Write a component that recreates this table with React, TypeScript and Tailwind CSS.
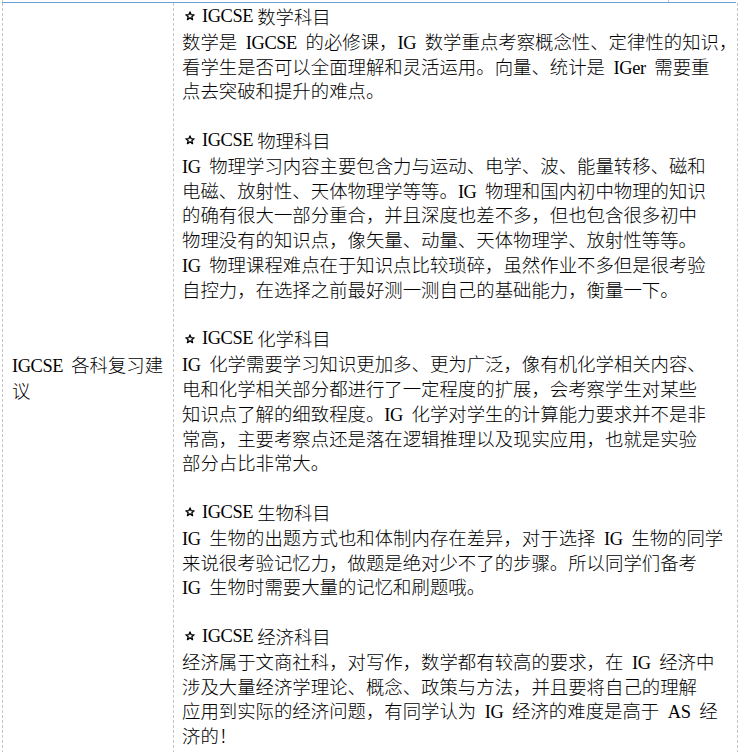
import React from "react";

const LATIN = "font-['Liberation_Serif',serif] tracking-[-0.4px] [word-spacing:4.4px]";

function Run({ text }: { text: string }) {
  const parts = text.split(/([\x00-\x7F]+)/).filter((p) => p.length > 0);
  return (
    <>
      {parts.map((p, i) =>
        /^[\x00-\x7F]+$/.test(p) ? (
          <span key={i} className={LATIN}>
            {p}
          </span>
        ) : (
          <React.Fragment key={i}>{p}</React.Fragment>
        )
      )}
    </>
  );
}

function Star() {
  return (
    <svg width="10" height="10" viewBox="0 0 20 20" className="block">
      <path
        d="M10 1.8 L12.3 7.4 L18.3 7.6 L13.6 11.3 L15.2 17.2 L10 13.8 L4.8 17.2 L6.4 11.3 L1.7 7.6 L7.7 7.4 Z"
        fill="white"
        stroke="black"
        strokeWidth="2.6"
        strokeLinejoin="round"
      />
    </svg>
  );
}

type Section = { title: string; lines: string[] };

const sections: Section[] = [
  {
    title: "数学科目",
    lines: [
      "数学是 IGCSE 的必修课，IG 数学重点考察概念性、定律性的知识，",
      "看学生是否可以全面理解和灵活运用。向量、统计是 IGer 需要重",
      "点去突破和提升的难点。",
    ],
  },
  {
    title: "物理科目",
    lines: [
      "IG 物理学习内容主要包含力与运动、电学、波、能量转移、磁和",
      "电磁、放射性、天体物理学等等。IG 物理和国内初中物理的知识",
      "的确有很大一部分重合，并且深度也差不多，但也包含很多初中",
      "物理没有的知识点，像矢量、动量、天体物理学、放射性等等。",
      "IG 物理课程难点在于知识点比较琐碎，虽然作业不多但是很考验",
      "自控力，在选择之前最好测一测自己的基础能力，衡量一下。",
    ],
  },
  {
    title: "化学科目",
    lines: [
      "IG 化学需要学习知识更加多、更为广泛，像有机化学相关内容、",
      "电和化学相关部分都进行了一定程度的扩展，会考察学生对某些",
      "知识点了解的细致程度。IG 化学对学生的计算能力要求并不是非",
      "常高，主要考察点还是落在逻辑推理以及现实应用，也就是实验",
      "部分占比非常大。",
    ],
  },
  {
    title: "生物科目",
    lines: [
      "IG 生物的出题方式也和体制内存在差异，对于选择 IG 生物的同学",
      "来说很考验记忆力，做题是绝对少不了的步骤。所以同学们备考",
      "IG 生物时需要大量的记忆和刷题哦。",
    ],
  },
  {
    title: "经济科目",
    lines: [
      "经济属于文商社科，对写作，数学都有较高的要求，在 IG 经济中",
      "涉及大量经济学理论、概念、政策与方法，并且要将自己的理解",
      "应用到实际的经济问题，有同学认为 IG 经济的难度是高于 AS 经",
      "济的！",
    ],
  },
];

export default function App() {
  return (
    <div className="w-[740px] h-[752px] bg-white text-black font-['Noto_Sans_CJK_SC',sans-serif] font-light text-[18.4px] overflow-hidden">
      <div className="h-[2px] flex">
        <div className="ml-[2px] w-[666px] border-l border-dashed border-[#c4c4c4]" />
        <div className="border-l border-[#c8c8c8]" />
      </div>
      <div className="ml-[2px] w-[734px] flex border-t border-[#6a9fd8]">
        <div className="w-[172px] shrink-0 flex items-center border-l border-r border-b border-dashed border-[#c4c4c4] pl-[9px] pr-[6px]">
          <div className="leading-[24.8px]">
            <span className="font-['Liberation_Serif',serif] tracking-[-0.4px]">IGCSE</span>
            <span className="ml-[8px]">各科复习建议</span>
          </div>
        </div>
        <div className="flex-1 border-r border-b border-dashed border-[#c4c4c4] pl-[8px] pt-[1px] pb-[4px]">
          {sections.map((s, si) => (
            <div key={si}>
              <div className="h-[24.8px] leading-[24.8px] whitespace-pre flex items-center">
                <span className="w-[20px] pl-[3px] flex items-center">
                  <Star />
                </span>
                <span className={LATIN + " mr-[4px]"}>IGCSE</span>
                <span>{s.title}</span>
              </div>
              {s.lines.map((l, li) => (
                <div key={li} className="h-[24.8px] leading-[24.8px] whitespace-pre">
                  <Run text={l} />
                </div>
              ))}
              {si < sections.length - 1 && <div className="h-[24.8px]" />}
            </div>
          ))}
        </div>
      </div>
    </div>
  );
}
